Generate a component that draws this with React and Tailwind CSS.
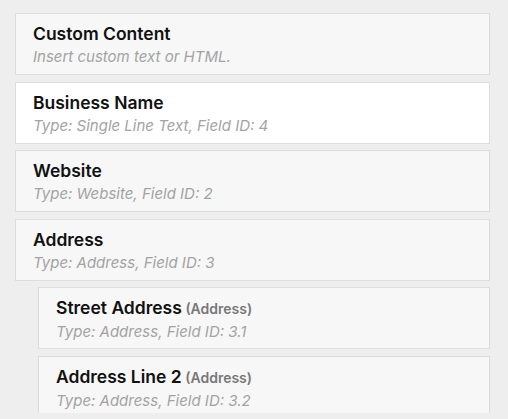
import React from 'react';

const fields = [
    { title: 'Custom Content', desc: 'Insert custom text or HTML.' },
    { title: 'Business Name', desc: 'Type: Single Line Text, Field ID: 4', active: true },
    { title: 'Website', desc: 'Type: Website, Field ID: 2' },
    { title: 'Address', desc: 'Type: Address, Field ID: 3' },
    { title: 'Street Address', parent: 'Address', desc: 'Type: Address, Field ID: 3.1', child: true },
    { title: 'Address Line 2', parent: 'Address', desc: 'Type: Address, Field ID: 3.2', child: true },
];

export default function App() {
    return (
        <div className="h-[419px] bg-[#eeeeee] font-['Inter','Liberation_Sans',sans-serif]">
            {/* field list, clipped at the bottom */}
            <div className="h-[413px] overflow-hidden pt-[13px] pl-[15px] pr-[18px] flex flex-col gap-[6.6px]">
                {fields.map((f) => (
                    <div
                        key={f.title}
                        className={`shrink-0 h-[62px] border border-[#dddddd] pl-[17px] pt-[8px] ${f.child ? 'ml-[23px]' : ''} ${f.active ? 'bg-white' : 'bg-[#f7f7f7]'}`}
                    >
                        <div className="text-[17.5px] leading-[23px] font-semibold text-[#111]">
                            {f.title}
                            {f.parent && (
                                <span className="text-[14px] font-semibold text-[#777]"> ({f.parent})</span>
                            )}
                        </div>
                        <div className="text-[15px] leading-[24px] italic text-[#a3a3a3]">{f.desc}</div>
                    </div>
                ))}
            </div>
        </div>
    );
}
